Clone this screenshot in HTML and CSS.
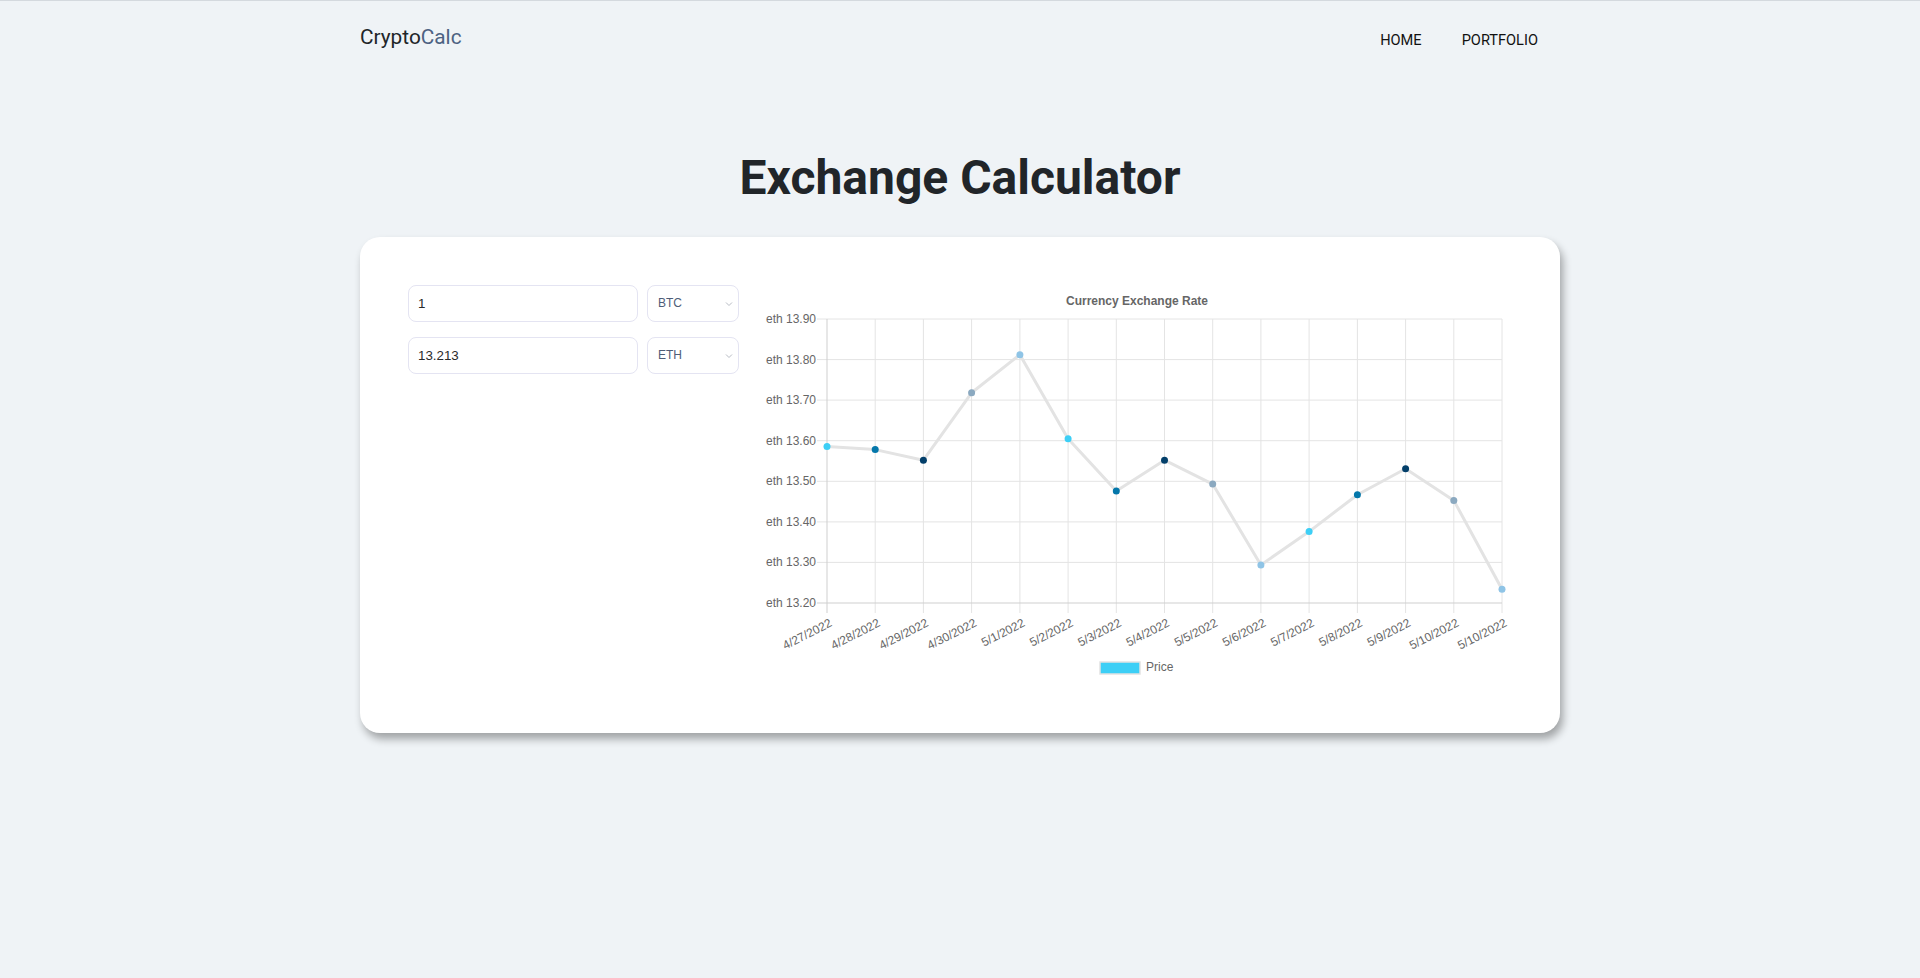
FILE: index.html
```html
<!DOCTYPE html>
<html lang="en">
<head>
<meta charset="utf-8">
<title>CryptoCalc</title>
<link rel="stylesheet" href="styles.css">
</head>
<body>
<header class="topbar">
  <div class="container nav-row">
    <a class="brand">Crypto<span class="brand-accent">Calc</span></a>
    <nav class="nav">
      <a class="nav-link">HOME</a>
      <a class="nav-link">PORTFOLIO</a>
    </nav>
  </div>
</header>
<main class="container">
  <h1 class="page-title">Exchange Calculator</h1>
  <section class="card">
    <div class="converter">
      <div class="conv-row">
        <input class="amount" type="text" value="1">
        <div class="select-wrap">
          <select class="currency"><option>BTC</option></select>
          <svg class="chev" width="8" height="6" viewBox="0 0 8 6"><path d="M1 1.5 L4 4.5 L7 1.5" fill="none" stroke="#b8bcc4" stroke-width="1"/></svg>
        </div>
      </div>
      <div class="conv-row">
        <input class="amount" type="text" value="13.213">
        <div class="select-wrap">
          <select class="currency"><option>ETH</option></select>
          <svg class="chev" width="8" height="6" viewBox="0 0 8 6"><path d="M1 1.5 L4 4.5 L7 1.5" fill="none" stroke="#b8bcc4" stroke-width="1"/></svg>
        </div>
      </div>
    </div>
    <div class="chart">
      <svg width="752" height="400" viewBox="0 0 752 400" class="chart-svg">
        <text x="377" y="20" class="c-title" text-anchor="middle">Currency Exchange Rate</text>
        <g class="grid">
          <line x1="57" y1="34" x2="742" y2="34"/>
          <line x1="57" y1="74.6" x2="742" y2="74.6"/>
          <line x1="57" y1="115.1" x2="742" y2="115.1"/>
          <line x1="57" y1="155.7" x2="742" y2="155.7"/>
          <line x1="57" y1="196.3" x2="742" y2="196.3"/>
          <line x1="57" y1="236.9" x2="742" y2="236.9"/>
          <line x1="57" y1="277.4" x2="742" y2="277.4"/>
          <line x1="115.2" y1="34" x2="115.2" y2="328"/>
          <line x1="163.4" y1="34" x2="163.4" y2="328"/>
          <line x1="211.6" y1="34" x2="211.6" y2="328"/>
          <line x1="259.9" y1="34" x2="259.9" y2="328"/>
          <line x1="308.1" y1="34" x2="308.1" y2="328"/>
          <line x1="356.3" y1="34" x2="356.3" y2="328"/>
          <line x1="404.5" y1="34" x2="404.5" y2="328"/>
          <line x1="452.7" y1="34" x2="452.7" y2="328"/>
          <line x1="500.9" y1="34" x2="500.9" y2="328"/>
          <line x1="549.1" y1="34" x2="549.1" y2="328"/>
          <line x1="597.4" y1="34" x2="597.4" y2="328"/>
          <line x1="645.6" y1="34" x2="645.6" y2="328"/>
          <line x1="693.8" y1="34" x2="693.8" y2="328"/>
          <line x1="742" y1="34" x2="742" y2="328"/>
        </g>
        <g class="axis">
          <line x1="57" y1="318" x2="742" y2="318"/>
          <line x1="67" y1="34" x2="67" y2="328"/>
        </g>
        <g class="ylabels" text-anchor="end">
          <text x="56" y="38">eth 13.90</text>
          <text x="56" y="78.6">eth 13.80</text>
          <text x="56" y="119.1">eth 13.70</text>
          <text x="56" y="159.7">eth 13.60</text>
          <text x="56" y="200.3">eth 13.50</text>
          <text x="56" y="240.9">eth 13.40</text>
          <text x="56" y="281.4">eth 13.30</text>
          <text x="56" y="322">eth 13.20</text>
        </g>
        <g class="xlabels" text-anchor="end">
          <text transform="translate(71 337) rotate(-27)">4/27/2022</text>
          <text transform="translate(119.2 337) rotate(-27)">4/28/2022</text>
          <text transform="translate(167.4 337) rotate(-27)">4/29/2022</text>
          <text transform="translate(215.6 337) rotate(-27)">4/30/2022</text>
          <text transform="translate(263.9 337) rotate(-27)">5/1/2022</text>
          <text transform="translate(312.1 337) rotate(-27)">5/2/2022</text>
          <text transform="translate(360.3 337) rotate(-27)">5/3/2022</text>
          <text transform="translate(408.5 337) rotate(-27)">5/4/2022</text>
          <text transform="translate(456.7 337) rotate(-27)">5/5/2022</text>
          <text transform="translate(504.9 337) rotate(-27)">5/6/2022</text>
          <text transform="translate(553.1 337) rotate(-27)">5/7/2022</text>
          <text transform="translate(601.4 337) rotate(-27)">5/8/2022</text>
          <text transform="translate(649.6 337) rotate(-27)">5/9/2022</text>
          <text transform="translate(697.8 337) rotate(-27)">5/10/2022</text>
          <text transform="translate(746 337) rotate(-27)">5/10/2022</text>
        </g>
        <polyline class="dataline" points="67,161.4 115.2,164.6 163.4,175.2 211.6,107.8 259.9,69.7 308.1,153.7 356.3,206 404.5,175.2 452.7,199.1 500.9,279.9 549.1,246.6 597.4,209.7 645.6,183.7 693.8,215.4 742,304.2"/>
        <g>
          <circle cx="67" cy="161.4" r="3.5" class="p1"/>
          <circle cx="115.2" cy="164.6" r="3.5" class="p2"/>
          <circle cx="163.4" cy="175.2" r="3.5" class="p3"/>
          <circle cx="211.6" cy="107.8" r="3.5" class="p4"/>
          <circle cx="259.9" cy="69.7" r="3.5" class="p5"/>
          <circle cx="308.1" cy="153.7" r="3.5" class="p1"/>
          <circle cx="356.3" cy="206" r="3.5" class="p2"/>
          <circle cx="404.5" cy="175.2" r="3.5" class="p3"/>
          <circle cx="452.7" cy="199.1" r="3.5" class="p4"/>
          <circle cx="500.9" cy="279.9" r="3.5" class="p5"/>
          <circle cx="549.1" cy="246.6" r="3.5" class="p1"/>
          <circle cx="597.4" cy="209.7" r="3.5" class="p2"/>
          <circle cx="645.6" cy="183.7" r="3.5" class="p3"/>
          <circle cx="693.8" cy="215.4" r="3.5" class="p4"/>
          <circle cx="742" cy="304.2" r="3.5" class="p5"/>
        </g>
        <rect x="340" y="377" width="40" height="12" class="legend-box"/>
        <text x="386" y="386" class="legend-text">Price</text>
      </svg>
    </div>
  </section>
</main>
</body>
</html>
```
FILE: styles.css
```css
html, body {
  margin: 0;
  padding: 0;
}
body {
  background: #eff3f6;
  font-family: Roboto, "Liberation Sans", sans-serif;
  color: #212529;
  min-height: 978px;
}
.container {
  width: 1200px;
  margin: 0 auto;
}
.topbar {
  border-top: 1px solid #d4d9de;
}
.nav-row {
  display: flex;
  justify-content: space-between;
  align-items: center;
  height: 73px;
}
.brand {
  font-size: 20.8px;
  line-height: 30px;
  color: #212529;
  margin-top: -1px;
}
.brand-accent {
  color: #4d6282;
}
.nav {
  display: flex;
  padding-top: 4px;
}
.nav-link {
  font-size: 14.6px;
  line-height: 20px;
  color: #111;
  padding: 0 20px;
}
.nav-link:last-child {
  padding-right: 22px;
}
.page-title {
  margin: 75px 0 30px;
  text-align: center;
  font-size: 48px;
  font-weight: 700;
  line-height: 57.6px;
  color: #212529;
}
.card {
  background: #fff;
  border-radius: 20px;
  box-shadow: 3px 6px 8px rgba(0, 0, 0, 0.33);
  padding: 48px;
  display: flex;
  gap: 21px;
  height: 400px;
}
.converter {
  width: 331px;
  display: flex;
  flex-direction: column;
  gap: 15px;
}
.conv-row {
  display: flex;
  gap: 9px;
}
.amount {
  box-sizing: border-box;
  width: 230px;
  height: 37px;
  border: 1px solid #e4e4f2;
  border-radius: 8px;
  padding: 0 9px;
  font-family: "Liberation Sans", Arial, sans-serif;
  font-size: 13.333px;
  color: #2a2a2a;
  background: #fff;
  outline: none;
}
.select-wrap {
  position: relative;
  width: 92px;
  height: 37px;
}
.currency {
  -webkit-appearance: none;
  appearance: none;
  box-sizing: border-box;
  width: 92px;
  height: 37px;
  border: 1px solid #e4e4f2;
  border-radius: 8px;
  padding: 0 10px;
  font-family: "Liberation Sans", Arial, sans-serif;
  font-size: 12px;
  color: #4e5d78;
  background: #fff;
  outline: none;
}
.chev {
  position: absolute;
  right: 6px;
  top: 16px;
  pointer-events: none;
}
.chart {
  width: 752px;
  height: 400px;
}
.chart-svg {
  display: block;
  font-family: "Liberation Sans", Arial, sans-serif;
  font-size: 12px;
}
.c-title {
  font-weight: 700;
  fill: #666;
}
.grid line {
  stroke: #e4e4e4;
  stroke-width: 1;
}
.axis line {
  stroke: #cfcfcf;
  stroke-width: 1;
}
.ylabels text, .xlabels text, .legend-text {
  fill: #666;
}
.xlabels text {
  dominant-baseline: central;
}
.dataline {
  fill: none;
  stroke: #e3e3e3;
  stroke-width: 3;
  stroke-linejoin: round;
}
.p1 { fill: #3dcff6; }
.p2 { fill: #0477aa; }
.p3 { fill: #033f6a; }
.p4 { fill: #8ba9c0; }
.p5 { fill: #8fc4e6; }
.legend-box {
  fill: #3dcff6;
  stroke: #e2e2e2;
  stroke-width: 1.5;
}
```
